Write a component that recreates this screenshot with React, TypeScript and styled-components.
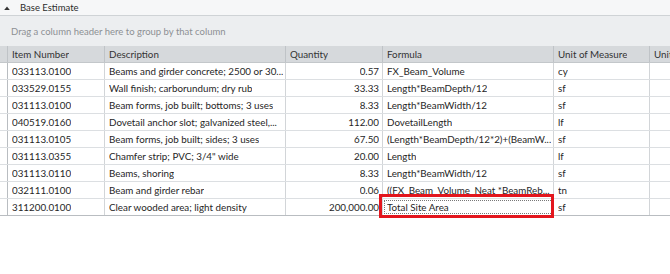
import React from 'react';
import styled, { createGlobalStyle } from 'styled-components';

const GlobalStyle = createGlobalStyle`
  html, body {
    margin: 0;
    padding: 0;
    background: #ffffff;
  }
  body {
    font-family: Lato, "Liberation Sans", sans-serif;
    font-size: 10px;
    color: #262626;
  }
`;

interface Row {
    item: string;
    description: string;
    quantity: string;
    formula: string;
    unit: string;
}

const rows: Row[] = [
    { item: '033113.0100', description: 'Beams and girder concrete; 2500 or 30...', quantity: '0.57', formula: 'FX_Beam_Volume', unit: 'cy' },
    { item: '033529.0155', description: 'Wall finish; carborundum; dry rub', quantity: '33.33', formula: 'Length*BeamDepth/12', unit: 'sf' },
    { item: '031113.0100', description: 'Beam forms, job built; bottoms; 3 uses', quantity: '8.33', formula: 'Length*BeamWidth/12', unit: 'sf' },
    { item: '040519.0160', description: 'Dovetail anchor slot; galvanized steel,...', quantity: '112.00', formula: 'DovetailLength', unit: 'lf' },
    { item: '031113.0105', description: 'Beam forms, job built; sides; 3 uses', quantity: '67.50', formula: '(Length*BeamDepth/12*2)+(BeamW...', unit: 'sf' },
    { item: '031113.0355', description: 'Chamfer strip; PVC; 3/4" wide', quantity: '20.00', formula: 'Length', unit: 'lf' },
    { item: '031113.0110', description: 'Beams, shoring', quantity: '8.33', formula: 'Length*BeamWidth/12', unit: 'sf' },
    { item: '032111.0100', description: 'Beam and girder rebar', quantity: '0.06', formula: '((FX_Beam_Volume_Neat *BeamReb...', unit: 'tn' },
    { item: '311200.0100', description: 'Clear wooded area; light density', quantity: '200,000.00', formula: 'Total Site Area', unit: 'sf' },
];

const columns = '8px 97px 181px 97px 171px 96px 100px';

const Page = styled.div`
  width: 670px;
  height: 274px;
  overflow: hidden;
  background: #ffffff;
`;

const GroupBar = styled.div`
  height: 15px;
  display: flex;
  align-items: center;
  gap: 10px;
  padding-left: 4px;
  background: #f6f7f8;
  border-bottom: 1px solid #cfd3d6;
  font-size: 9.5px;
  color: #2b2b2b;
`;

const Caret = styled.svg`
  width: 6px;
  height: 4px;
  fill: #333333;
`;

const DropZone = styled.div`
  height: 30px;
  display: flex;
  align-items: center;
  padding-left: 11px;
  background: #eceef0;
  color: #8c9094;
  font-size: 9.5px;
`;

const GridRow = styled.div<{ $header?: boolean; $last?: boolean }>`
  display: grid;
  grid-template-columns: ${columns};
  width: 770px;
  height: 17px;
  box-sizing: border-box;
  background: ${p => (p.$header ? '#d6d9dc' : '#ffffff')};
  border-bottom: 1px solid ${p => (p.$header ? '#c3c7ca' : p.$last ? '#b9bdc1' : '#dcdfe2')};
`;

const Cell = styled.div<{ $align?: 'left' | 'right'; $header?: boolean }>`
  position: relative;
  box-sizing: border-box;
  min-width: 0;
  border-right: 1px solid ${p => (p.$header ? '#bfc3c7' : '#d2d5d8')};
  padding: 0 ${p => (p.$align === 'right' ? '3px' : '1px')} 0 4px;
  display: flex;
  align-items: center;
  justify-content: ${p => (p.$align === 'right' ? 'flex-end' : 'flex-start')};
  font-size: 9.8px;
  color: ${p => (p.$header ? '#333333' : '#262626')};
`;

const CellText = styled.span`
  white-space: nowrap;
  overflow: hidden;
`;

const Gutter = styled.div<{ $header?: boolean }>`
  box-sizing: border-box;
  border-right: 1px solid ${p => (p.$header ? '#bfc3c7' : '#b9bdc1')};
  background: ${p => (p.$header ? '#d6d9dc' : '#ffffff')};
`;

const FocusCell = styled(Cell)`
  outline: 1px dotted #777777;
  outline-offset: -2px;
`;

const Highlight = styled.div`
  position: absolute;
  left: -4px;
  top: -5px;
  right: -1px;
  bottom: -3px;
  border: 3px solid #e3161d;
  pointer-events: none;
`;

export default function App() {
    return (
        <Page>
            <GlobalStyle />
            <GroupBar>
                <Caret viewBox="0 0 7 5">
                    <path d="M0 5 L3.5 0.5 L7 5 Z" />
                </Caret>
                Base Estimate
            </GroupBar>
            <DropZone>Drag a column header here to group by that column</DropZone>
            <GridRow $header>
                <Gutter $header />
                <Cell $header><CellText>Item Number</CellText></Cell>
                <Cell $header><CellText>Description</CellText></Cell>
                <Cell $header><CellText>Quantity</CellText></Cell>
                <Cell $header><CellText>Formula</CellText></Cell>
                <Cell $header><CellText>Unit of Measure</CellText></Cell>
                <Cell $header><CellText>Unit</CellText></Cell>
            </GridRow>
            {rows.map((row, index) => {
                const last = index === rows.length - 1;
                return (
                    <GridRow key={row.item} $last={last}>
                        <Gutter />
                        <Cell><CellText>{row.item}</CellText></Cell>
                        <Cell><CellText>{row.description}</CellText></Cell>
                        <Cell $align="right"><CellText>{row.quantity}</CellText></Cell>
                        {last ? (
                            <FocusCell>
                                <CellText>{row.formula}</CellText>
                                <Highlight />
                            </FocusCell>
                        ) : (
                            <Cell><CellText>{row.formula}</CellText></Cell>
                        )}
                        <Cell><CellText>{row.unit}</CellText></Cell>
                        <Cell />
                    </GridRow>
                );
            })}
        </Page>
    );
}
